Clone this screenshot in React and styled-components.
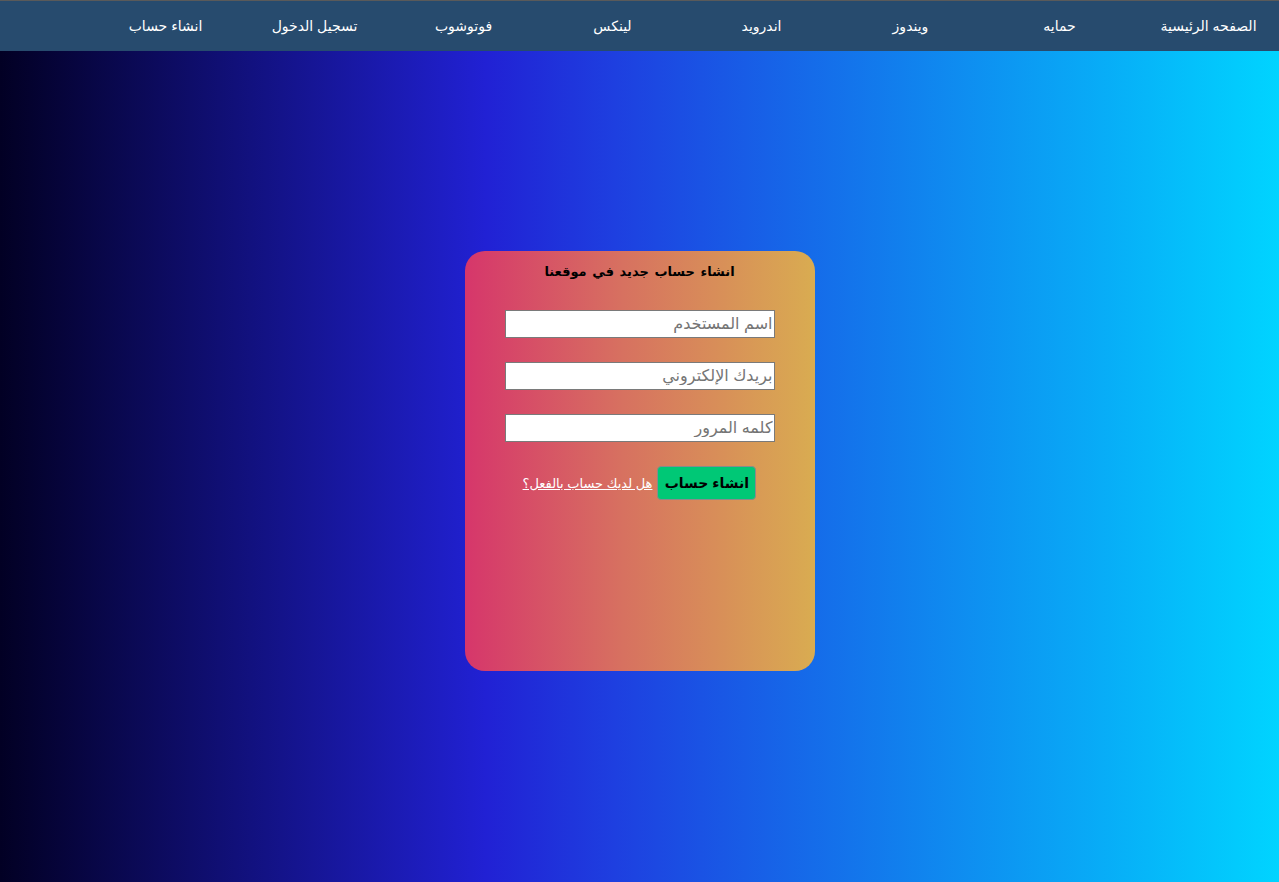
import styled, { createGlobalStyle } from "styled-components";

const GlobalStyle = createGlobalStyle`
  html, body {
    margin: 0;
    padding: 0;
  }
  body {
    font-family: "Liberation Sans", "DejaVu Sans", Arial, sans-serif;
    overflow: hidden;
  }
`;

const Page = styled.div`
  min-height: 882px;
  display: flex;
  flex-direction: column;
  background: linear-gradient(
    90deg,
    #020024 0%,
    #2121d4 38%,
    #1e3fe0 48%,
    #00d4ff 100%
  );
`;

const NavBar = styled.nav`
  height: 50px;
  border-top: 1px solid #5a5a5a;
  background-color: #274b6e;
  overflow: hidden;
`;

const NavList = styled.ul`
  direction: rtl;
  list-style: none;
  margin: 0 -4px 0 0;
  padding: 0;
  height: 100%;
  display: flex;
  align-items: center;
`;

const NavItem = styled.li`
  width: 149px;
  flex: none;
  text-align: center;
  color: #fff;
  font-size: 14px;
  margin-top: -1px;
`;

const Main = styled.main`
  flex: 1;
  display: flex;
  justify-content: center;
  padding-top: 200px;
`;

const Card = styled.form`
  direction: rtl;
  width: 350px;
  height: 420px;
  box-sizing: border-box;
  border-radius: 20px;
  background: linear-gradient(90deg, #d6366b 0%, #d77160 45%, #d9ac51 100%);
  display: flex;
  flex-direction: column;
  align-items: center;
  padding-top: 13px;
`;

const Title = styled.h3`
  margin: 0 0 30px;
  font-size: 13px;
  line-height: 16px;
  font-weight: bold;
  color: #000;
  word-spacing: 2px;
`;

const Field = styled.input`
  width: 270px;
  height: 28px;
  box-sizing: border-box;
  margin-bottom: 24px;
  border: 1px solid #7a7a7a;
  padding: 0 1px;
  font-size: 16px;
  font-family: "Liberation Sans", "DejaVu Sans", Arial, sans-serif;
  direction: rtl;
  background: #fff;
  outline: none;
  &::placeholder {
    color: #757575;
  }
`;

const Actions = styled.div`
  display: flex;
  align-items: center;
  gap: 5px;
`;

const SubmitButton = styled.button`
  width: 99px;
  height: 34px;
  border: 1px solid #8a8a8a;
  border-radius: 4px;
  background-color: #00c876;
  color: #000;
  font-size: 14px;
  font-weight: bold;
  font-family: "Liberation Sans", "DejaVu Sans", Arial, sans-serif;
  cursor: pointer;
`;

const LoginLink = styled.a`
  color: #fff;
  font-size: 13px;
  text-decoration: underline;
`;

const links = [
  "الصفحه الرئيسية",
  "حمايه",
  "ويندوز",
  "اندرويد",
  "لينكس",
  "فوتوشوب",
  "تسجيل الدخول",
  "انشاء حساب",
];

export default function App() {
  return (
    <>
      <GlobalStyle />
      <Page>
        <NavBar>
          <NavList>
            {links.map((l) => (
              <NavItem key={l}>{l}</NavItem>
            ))}
          </NavList>
        </NavBar>
        <Main>
          <Card onSubmit={(e) => e.preventDefault()}>
            <Title>انشاء حساب جديد في موقعنا</Title>
            <Field type="text" placeholder="اسم المستخدم" />
            <Field type="email" placeholder="بريدك الإلكتروني" />
            <Field type="password" placeholder="كلمه المرور" />
            <Actions>
              <SubmitButton type="submit">انشاء حساب</SubmitButton>
              <LoginLink href="#">هل لديك حساب بالفعل؟</LoginLink>
            </Actions>
          </Card>
        </Main>
      </Page>
    </>
  );
}
